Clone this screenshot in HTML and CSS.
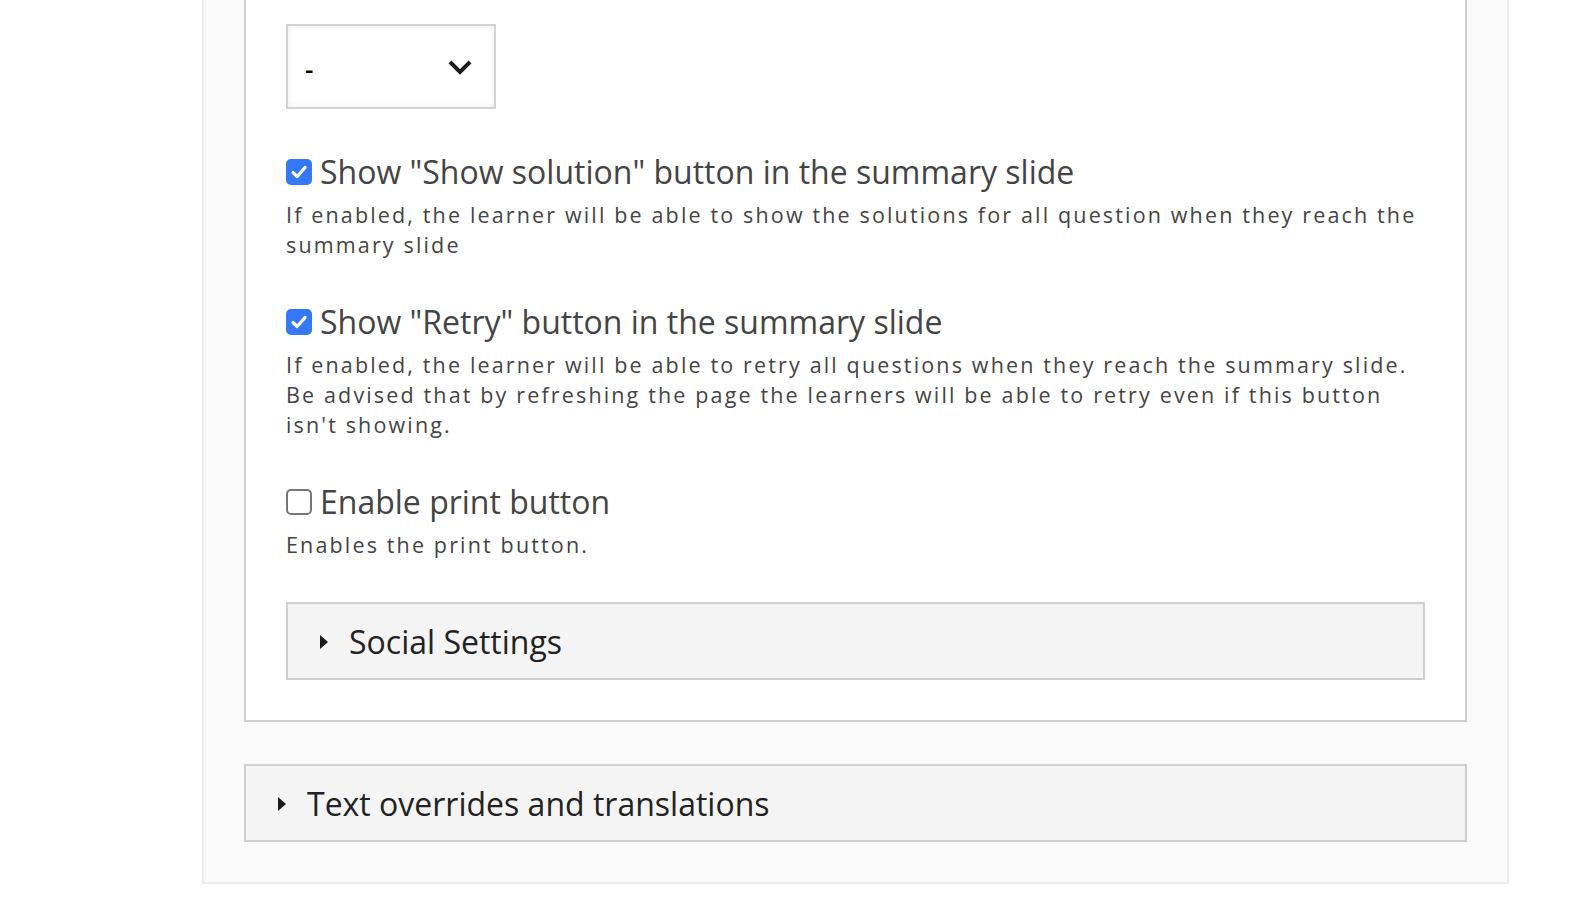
FILE: index.html
```html
<!DOCTYPE html>
<html>
<head>
  <meta charset="UTF-8">
  <title>Summary settings</title>
  <link rel="stylesheet" href="styles.css">
</head>
<body>
  <div class="outer">
    <div class="group">
      <div class="select">
        <span class="select-value">-</span>
        <svg class="chevron" width="26" height="18" viewBox="0 0 26 18">
          <polyline points="3,4 13,14 23,4" fill="none" stroke="#1a1a1a" stroke-width="4" stroke-linejoin="miter"/>
        </svg>
      </div>

      <div class="field">
        <label class="field-label">
          <span class="box checked">
            <svg width="18" height="18" viewBox="0 0 18 18"><polyline points="3,9.5 7.2,13.5 15,4.5" fill="none" stroke="#fff" stroke-width="3.2" stroke-linecap="round" stroke-linejoin="round"/></svg>
          </span>
          Show "Show solution" button in the summary slide
        </label>
        <div class="description">If enabled, the learner will be able to show the solutions for all question when they reach the summary slide</div>
      </div>

      <div class="field">
        <label class="field-label">
          <span class="box checked">
            <svg width="18" height="18" viewBox="0 0 18 18"><polyline points="3,9.5 7.2,13.5 15,4.5" fill="none" stroke="#fff" stroke-width="3.2" stroke-linecap="round" stroke-linejoin="round"/></svg>
          </span>
          Show "Retry" button in the summary slide
        </label>
        <div class="description">If enabled, the learner will be able to retry all questions when they reach the summary slide. Be advised that by refreshing the page the learners will be able to retry even if this button isn't showing.</div>
      </div>

      <div class="field">
        <label class="field-label">
          <span class="box"></span>
          Enable print button
        </label>
        <div class="description">Enables the print button.</div>
      </div>

      <div class="collapsible">
        <span class="arrow"></span>
        <span class="collapsible-title">Social Settings</span>
      </div>
    </div>

    <div class="collapsible wide">
      <span class="arrow"></span>
      <span class="collapsible-title">Text overrides and translations</span>
    </div>
  </div>
</body>
</html>
```

FILE: styles.css
```css
body {
  margin: 0;
  background: #fff;
  font-family: "Open Sans", "Noto Sans", sans-serif;
}

.outer {
  margin-left: 202px;
  width: 1307px;
  box-sizing: border-box;
  background: #fafafa;
  border: 2px solid #ececec;
  border-top: 0;
  padding: 0 40px 40px;
}

.group {
  background: #fff;
  border: 2px solid #cfcfcf;
  border-top: 0;
  padding: 24px 40px 40px;
}

.select {
  width: 210px;
  height: 85px;
  box-sizing: border-box;
  border: 2px solid #d2d2d2;
  box-shadow: inset 0 0 6px rgba(0, 0, 0, 0.08);
  background: #fff;
  display: flex;
  align-items: center;
  justify-content: space-between;
  padding: 0 21px 0 17px;
  margin-bottom: 43px;
}

.select-value {
  font-size: 26px;
  font-weight: 600;
  color: #000;
  margin-top: 4px;
}

.field {
  margin-bottom: 42px;
}

.field-label {
  display: flex;
  align-items: center;
  gap: 8px;
  font-size: 32px;
  line-height: 40px;
  color: #444;
}

.box {
  width: 26px;
  height: 26px;
  box-sizing: border-box;
  border: 2px solid #767676;
  border-radius: 5px;
  display: flex;
  align-items: center;
  justify-content: center;
  flex-shrink: 0;
}

.box.checked {
  background: #3478f6;
  border-color: #3478f6;
}

.description {
  margin-top: 8px;
  font-size: 21.5px;
  line-height: 30px;
  letter-spacing: 2.15px;
  color: #444;
}

.collapsible {
  height: 78px;
  box-sizing: border-box;
  background: #f4f4f4;
  border: 2px solid #cfcfcf;
  display: flex;
  align-items: center;
  padding: 2px 0 0 32px;
}

.collapsible.wide {
  margin-top: 42px;
}

.arrow {
  width: 0;
  height: 0;
  border-top: 7px solid transparent;
  border-bottom: 7px solid transparent;
  border-left: 8px solid #1a1a1a;
  margin-right: 21px;
}

.collapsible-title {
  font-size: 32px;
  line-height: 40px;
  color: #222;
}
```
